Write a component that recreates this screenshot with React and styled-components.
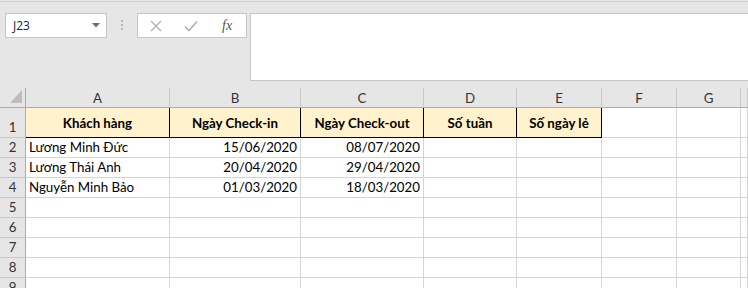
import React from 'react'
import styled, { createGlobalStyle } from 'styled-components'

const GlobalStyle = createGlobalStyle`
    body {
        margin: 0;
        background: #e6e6e6;
        overflow: hidden;
        font-family: Lato, "Open Sans", sans-serif;
    }
`

const Page = styled.div`
    width: 748px;
    height: 288px;
    overflow: hidden;
    background: #e6e6e6;
`

const FormulaBar = styled.div`
    display: flex;
    align-items: flex-start;
    height: 87px;
    padding: 11px 0 0 5px;
    box-sizing: border-box;
    border-top: 1px solid #d2d2d2;
    margin-top: 1px;
`

const NameBox = styled.div`
    display: flex;
    align-items: center;
    justify-content: space-between;
    width: 102px;
    height: 25px;
    box-sizing: border-box;
    padding: 0 6px 0 7px;
    background: #fff;
    border: 1px solid #c6c6c6;
    font-family: "Open Sans", sans-serif;
    font-size: 12px;
    color: #222;
`

const Dots = styled.div`
    display: flex;
    flex-direction: column;
    gap: 2px;
    width: 30px;
    align-items: center;
    padding-top: 7px;

    span {
        width: 2px;
        height: 2px;
        background: #b4b4b4;
    }
`

const ButtonBox = styled.div`
    display: flex;
    align-items: center;
    width: 110px;
    height: 25px;
    box-sizing: border-box;
    background: #fff;
    border: 1px solid #c6c6c6;
    padding-left: 12px;
    gap: 22px;
`

const Fx = styled.span`
    font-family: "Liberation Serif", serif;
    font-style: italic;
    font-size: 14px;
    color: #555;
    margin-left: 2px;
`

const FormulaInput = styled.div`
    flex: 1;
    margin-left: 3px;
    height: 66px;
    background: #fff;
    border: 1px solid #c6c6c6;
    border-right: none;
`

const Sheet = styled.div`
    display: grid;
    grid-template-columns: 26px 144px 131px 123px 93px 85px 75px 64px 1fr;
    grid-auto-rows: 20px;
    grid-template-rows: 20px 30px;
    background: #fff;
    font-size: 13.3px;
    color: #000;
`

const Corner = styled.div`
    display: flex;
    justify-content: flex-end;
    align-items: flex-end;
    padding: 0 3px 4px 0;
    background: #e6e6e6;
    border-right: 1px solid #ababab;
    border-bottom: 1px solid #ababab;
`

const Triangle = styled.div`
    width: 0;
    height: 0;
    border-left: 12px solid transparent;
    border-bottom: 13px solid #bdbdbd;
`

const ColHead = styled.div`
    display: flex;
    align-items: center;
    justify-content: center;
    background: #e6e6e6;
    color: #333;
    border-right: 1px solid #c8c8c8;
    border-bottom: 1px solid #ababab;
`

const RowHead = styled.div`
    display: flex;
    align-items: flex-end;
    justify-content: center;
    padding-bottom: 2px;
    background: #e6e6e6;
    color: #333;
    border-right: 1px solid #ababab;
    border-bottom: 1px solid #c8c8c8;
`

const Cell = styled.div`
    display: flex;
    align-items: flex-end;
    justify-content: ${p => (p.$align === 'right' ? 'flex-end' : p.$align === 'center' ? 'center' : 'flex-start')};
    padding: 0 3px 2px 3px;
    white-space: nowrap;
    overflow: visible;
    border-right: 1px solid ${p => (p.$head ? '#000' : '#d4d4d4')};
    border-bottom: 1px solid ${p => (p.$head ? '#000' : '#d4d4d4')};
    background: ${p => (p.$head ? '#fff2cc' : '#fff')};
    font-weight: ${p => (p.$head ? 700 : 400)};
    padding-bottom: ${p => (p.$head ? '6px' : '2px')};
`

const columns = ['A', 'B', 'C', 'D', 'E', 'F', 'G', '']

const headers = ['Khách hàng', 'Ngày Check-in', 'Ngày Check-out', 'Số tuần', 'Số ngày lẻ']

const guests = [
    ['Lương Minh Đức', '15/06/2020', '08/07/2020'],
    ['Lương Thái Anh', '20/04/2020', '29/04/2020'],
    ['Nguyễn Minh Bảo', '01/03/2020', '18/03/2020'],
]

const App = () => {
    const rows = []
    for (let r = 2; r <= 10; r++) {
        const data = guests[r - 2] || []
        rows.push(
            <React.Fragment key={r}>
                <RowHead>{r}</RowHead>
                {columns.map((c, i) => (
                    <Cell key={i} $align={i > 0 ? 'right' : 'left'}>{data[i] || ''}</Cell>
                ))}
            </React.Fragment>
        )
    }

    return (
        <Page>
            <GlobalStyle />
            <FormulaBar>
                <NameBox>
                    <span>J23</span>
                    <svg width="8" height="5" viewBox="0 0 8 5">
                        <path d="M0 0 L8 0 L4 4.5 Z" fill="#707070" />
                    </svg>
                </NameBox>
                <Dots><span /><span /><span /></Dots>
                <ButtonBox>
                    <svg width="12" height="12" viewBox="0 0 12 12">
                        <path d="M1 1 L11 11 M11 1 L1 11" stroke="#b0b0b0" strokeWidth="1.4" />
                    </svg>
                    <svg width="14" height="12" viewBox="0 0 14 12">
                        <path d="M1 6.5 L5 10.5 L13 1.5" stroke="#b0b0b0" strokeWidth="1.6" fill="none" />
                    </svg>
                    <Fx>fx</Fx>
                </ButtonBox>
                <FormulaInput />
            </FormulaBar>
            <Sheet>
                <Corner><Triangle /></Corner>
                {columns.map((c, i) => <ColHead key={i}>{c}</ColHead>)}
                <RowHead>1</RowHead>
                {headers.map(h => <Cell key={h} $head $align="center">{h}</Cell>)}
                <Cell />
                <Cell />
                <Cell />
                {rows}
            </Sheet>
        </Page>
    )
}

export default App
